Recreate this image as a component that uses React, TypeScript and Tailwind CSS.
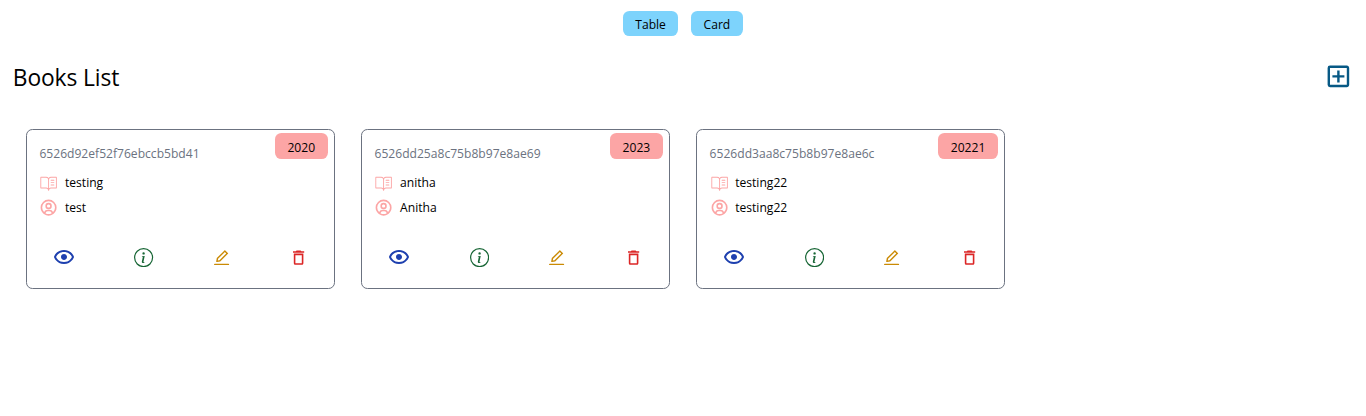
import { PiBookOpenTextLight } from "react-icons/pi";
import { BiUserCircle, BiShow } from "react-icons/bi";
import { BsInfoCircle } from "react-icons/bs";
import { AiOutlineEdit } from "react-icons/ai";
import { MdOutlineAddBox, MdOutlineDelete } from "react-icons/md";

type Book = { id: string; title: string; author: string; year: string };

const books: Book[] = [
  { id: "6526d92ef52f76ebccb5bd41", title: "testing", author: "test", year: "2020" },
  { id: "6526dd25a8c75b8b97e8ae69", title: "anitha", author: "Anitha", year: "2023" },
  { id: "6526dd3aa8c75b8b97e8ae6c", title: "testing22", author: "testing22", year: "20221" },
];

function BookCard({ book }: { book: Book }) {
  return (
    <article className="relative m-[12.8px] h-[160px] rounded-[6.4px] border border-[#6b7280] px-[12.8px] pt-[14px]">
      <h2 className="absolute right-[6.4px] top-[3.2px] flex h-[26px] items-center rounded-[6.4px] bg-[#fca5a5] px-[12.6px] pt-[3px]">
        {book.year}
      </h2>
      <h4 className="h-[19px] leading-[19px] text-[#6b7280]">{book.id}</h4>
      <div className="mt-[9.6px] flex h-[19.2px] items-center gap-x-[6.4px]">
        <PiBookOpenTextLight className="size-[19.2px] text-[#fca5a5]" />
        <h2>{book.title}</h2>
      </div>
      <div className="mt-[6.4px] flex h-[19.2px] items-center gap-x-[6.4px]">
        <BiUserCircle className="size-[19.2px] text-[#fca5a5]" />
        <h2>{book.author}</h2>
      </div>
      <div className="mt-[27.6px] flex items-center justify-between px-[12.8px]">
        <BiShow className="size-[24px] text-[#1e40af]" />
        <BsInfoCircle className="size-[19.2px] text-[#166534]" />
        <AiOutlineEdit className="size-[19.2px] text-[#ca8a04]" />
        <MdOutlineDelete className="size-[19.2px] text-[#dc2626]" />
      </div>
    </article>
  );
}

export default function App() {
  return (
    <main className="min-h-screen bg-white p-[12.8px] pt-[11px] font-['Open_Sans','Noto_Sans',sans-serif] text-[12.1px] leading-[19.2px] text-black">
      <div className="flex h-[25px] items-stretch justify-center gap-x-[12.8px]">
        <button className="w-[55px] rounded-[6.4px] bg-[#7dd3fc] pt-[3px]">Table</button>
        <button className="w-[52px] rounded-[6.4px] bg-[#7dd3fc] pt-[3px]">Card</button>
      </div>
      <div className="mt-[26px] flex h-[28.8px] items-center justify-between">
        <h1 className="mt-[4px] text-[22.8px] leading-[28.8px] tracking-[-0.12px]">Books List</h1>
        <MdOutlineAddBox className="size-[28.8px] text-[#075985]" />
      </div>
      <div className="mt-[25.6px] grid grid-cols-4">
        {books.map((book) => (
          <BookCard key={book.id} book={book} />
        ))}
      </div>
    </main>
  );
}
